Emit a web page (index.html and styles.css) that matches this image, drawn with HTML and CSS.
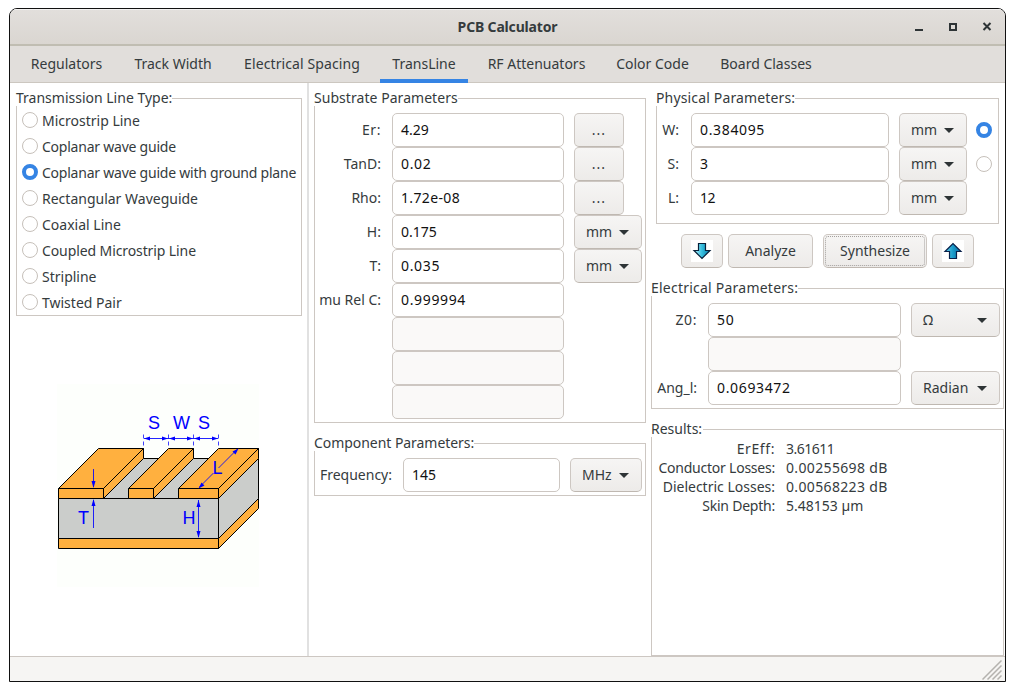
FILE: index.html
```html
<!DOCTYPE html>
<html lang="en">
<head>
<meta charset="utf-8">
<title>PCB Calculator</title>
<link rel="stylesheet" href="styles.css">
</head>
<body>
<div class="window">
  <header class="titlebar">
    <h1 class="title">PCB Calculator</h1>
    <div class="controls">
      <svg width="10" height="10" viewBox="0 0 10 10"><path d="M1 8h8" class="ctl"/></svg>
      <svg width="10" height="10" viewBox="0 0 10 10"><rect x="2" y="2" width="6" height="6" class="ctl"/></svg>
      <svg width="10" height="10" viewBox="0 0 10 10"><path d="M1.500 1l7 7M8.500 1l-7 7" class="ctl"/></svg>
    </div>
  </header>
  <nav class="tabs">
    <span class="tab t1">Regulators</span><span class="tab t2">Track Width</span><span class="tab t3">Electrical Spacing</span><span class="tab t4 active">TransLine</span><span class="tab t5">RF Attenuators</span><span class="tab t6">Color Code</span><span class="tab t7">Board Classes</span>
  </nav>
  <main class="content">
    <section class="col types">
      <fieldset class="group">
        <legend class="lg-type">Transmission Line Type:</legend>
        <div class="radio-list">
          <label class="choice"><i class="radio"></i><span>Microstrip Line</span></label>
          <label class="choice snug"><i class="radio"></i><span>Coplanar wave guide</span></label>
          <label class="choice snug"><i class="radio on"></i><span>Coplanar wave guide with ground plane</span></label>
          <label class="choice"><i class="radio"></i><span>Rectangular Waveguide</span></label>
          <label class="choice"><i class="radio"></i><span>Coaxial Line</span></label>
          <label class="choice slight"><i class="radio"></i><span>Coupled Microstrip Line</span></label>
          <label class="choice"><i class="radio"></i><span>Stripline</span></label>
          <label class="choice"><i class="radio"></i><span>Twisted Pair</span></label>
        </div>
      </fieldset>
      <svg class="diagram" width="202" height="203" viewBox="57 384 202 203">
        <rect x="57" y="384" width="202" height="203" fill="#fdfffc"/>
        <g stroke="#000" stroke-width="1" stroke-linejoin="round">
          <path fill="#cbcdcb" stroke="none" d="M103.500 498.500L143.500 458.500H218.500L258.500 458.500V498.500L218.500 538.500H58.500V498.500z"/>
          <path fill="none" d="M143.500 458.500h15M193.500 458.500h15"/>
          <path fill="#cbcdcb" d="M58.500 498.500h160v40h-160z"/>
          <path fill="#cbcdcb" d="M218.500 498.500l40-40v40l-40 40z"/>
          <path fill="#ffb03f" d="M58.500 538.500h160v10h-160zM218.500 538.500l40-40v10l-40 40z"/>
          <path fill="#ffb03f" d="M58.500 488.500l40-40h45l-40 40zM58.500 488.500h45v10h-45zM103.500 488.500l40-40v10l-40 40z"/>
          <path fill="#ffb03f" d="M128.500 488.500l40-40h25l-40 40zM128.500 488.500h25v10h-25zM153.500 488.500l40-40v10l-40 40z"/>
          <path fill="#ffb03f" d="M178.500 488.500l40-40h40l-40 40zM178.500 488.500h40v10h-40zM218.500 488.500l40-40v10l-40 40z"/>
        </g>
        <g stroke="#00f" fill="none">
          <path stroke-dasharray="4 3" stroke-opacity=".75" d="M143.500 434.500v13M168.500 434.500v13M193.500 434.500v13M218.500 434.500v13"/>
          <path stroke-opacity=".85" d="M144 438.500h74M93.500 469v18M93.500 500v28M198.500 500v37M237 449.500l-18.500 18.500M199.500 487l14-14"/>
        </g>
        <path fill="#00f" d="M144 438.500l6-2v4zM168 438.500l-6-2v4zM169 438.500l6-2v4zM193 438.500l-6-2v4zM194 438.500l6-2v4zM218 438.500l-6-2v4zM93.500 488l-2-7h4zM93.500 499l-2 7h4zM198.500 500l-2 7h4zM198.500 538l-2-7h4zM238.500 448.500l-6 3 3 3zM198.500 488.500l3-6 3 3z"/>
        <g class="dim">
          <text x="148" y="429">S</text><text x="173" y="429">W</text><text x="198" y="429">S</text>
          <text x="212.500" y="474">L</text><text x="78" y="524">T</text><text x="182.500" y="524">H</text>
        </g>
      </svg>
    </section>
    <section class="col substrate">
      <fieldset class="group">
        <legend class="lg-sub">Substrate Parameters</legend>
        <div class="rows">
          <span class="name loose">Er:</span><span class="field">4.29</span><span class="btn dots">...</span>
          <span class="name">TanD:</span><span class="field wide">0.02</span><span class="btn dots">...</span>
          <span class="name">Rho:</span><span class="field mid">1.72e-08</span><span class="btn dots">...</span>
          <span class="name">H:</span><span class="field">0.175</span><span class="btn select">mm</span>
          <span class="name">T:</span><span class="field wide">0.035</span><span class="btn select">mm</span>
          <span class="name">mu Rel C:</span><span class="field wide">0.999994</span><span></span>
          <span></span><span class="field off"></span><span></span>
          <span></span><span class="field off"></span><span></span>
          <span></span><span class="field off"></span><span></span>
        </div>
      </fieldset>
      <fieldset class="group component">
        <legend class="lg-comp">Component Parameters:</legend>
        <div class="rows">
          <span class="name">Frequency:</span><span class="field">145</span><span class="btn select">MHz</span>
        </div>
      </fieldset>
    </section>
    <section class="col results-col">
      <fieldset class="group physical">
        <legend class="lg-phys">Physical Parameters:</legend>
        <div class="rows">
          <span class="name">W:</span><span class="field wide">0.384095</span><span class="btn select">mm</span><i class="radio on"></i>
          <span class="name">S:</span><span class="field">3</span><span class="btn select">mm</span><i class="radio"></i>
          <span class="name">L:</span><span class="field tight">12</span><span class="btn select">mm</span><span></span>
        </div>
      </fieldset>
      <div class="actions">
        <span class="btn icon"><svg width="22" height="22" viewBox="0 0 22 22"><defs><linearGradient id="blue" x1="0" x2="1"><stop offset="0" stop-color="#b5f4ff"/><stop offset=".5" stop-color="#35bddd"/><stop offset="1" stop-color="#087ca9"/></linearGradient></defs><rect width="22" height="22" fill="#fff"/><path d="M7.500 3.500h7v7h4.500l-8 8-8-8h4.500z" fill="url(#blue)" stroke="#08203a" stroke-width="1.200"/></svg></span>
        <span class="btn analyze">Analyze</span>
        <span class="btn synth">Synthesize</span>
        <span class="btn icon"><svg width="22" height="22" viewBox="0 0 22 22"><defs><linearGradient id="deep" x1="0" x2="1"><stop offset="0" stop-color="#65cee9"/><stop offset=".5" stop-color="#1a9ccb"/><stop offset="1" stop-color="#0868a0"/></linearGradient></defs><rect width="22" height="22" fill="#fff"/><path d="M7.500 18.500h7v-7h4.500l-8-8-8 8h4.500z" fill="url(#deep)" stroke="#08204a" stroke-width="1.200"/></svg></span>
      </div>
      <fieldset class="group electrical">
        <legend class="lg-elec">Electrical Parameters:</legend>
        <div class="rows">
          <span class="name loose">Z0:</span><span class="field wide">50</span><span class="btn select">Ω</span>
          <span></span><span class="field off"></span><span></span>
          <span class="name">Ang_l:</span><span class="field wide">0.0693472</span><span class="btn select">Radian</span>
        </div>
      </fieldset>
      <fieldset class="group results">
        <legend class="lg-res">Results:</legend>
        <div class="output">
          <span class="name loose">ErEff:</span><span class="tight">3.61611</span>
          <span class="name snug">Conductor Losses:</span><span class="mid">0.00255698 dB</span>
          <span class="name">Dielectric Losses:</span><span class="mid">0.00568223 dB</span>
          <span class="name snug">Skin Depth:</span><span>5.48153 µm</span>
        </div>
      </fieldset>
    </section>
  </main>
  <footer class="status">
    <svg width="20" height="20" viewBox="0 0 20 20"><path d="M.5 19.500l19-19M5.500 19.500l14-14M10.500 19.500l9-9M15.500 19.500l4-4" stroke="#b4b2ae" stroke-width="1.500"/></svg>
  </footer>
</div>
</body>
</html>
```
FILE: styles.css
```css
* { box-sizing: border-box; }
body { margin: 0; padding: 8px 0 0 9px; background: #fff; color: #353b3d; font: 14px/19px "Noto Sans", "Open Sans", sans-serif; white-space: nowrap; }
.window { width: 997px; height: 674px; border: 1px solid #111; border-radius: 8px 8px 0 0; overflow: hidden; display: flex; flex-direction: column; }
.titlebar { height: 37px; flex: none; border-bottom: 2px solid #c0bdb2; background: linear-gradient(#e2dfdc, #dad6d1); box-shadow: inset 0 1px #f4f2f1; display: grid; grid-template-columns: 1fr auto 1fr; align-items: center; }
.title { grid-column: 2; margin: 0; font-size: 14px; line-height: 19px; font-weight: 700; letter-spacing: -.17px; }
.controls { justify-self: end; display: flex; gap: 24px; padding-right: 13px; }
.controls svg { display: block; }
.ctl { fill: none; stroke: #2e3436; stroke-width: 2; }
.tabs { height: 37px; flex: none; background: #e1dedb; border-bottom: 1px solid #ccc7c0; padding-left: 9px; display: flex; gap: 8px; }
.tab { text-align: center; line-height: 35px; height: 37px; }
.t1 { width: 95px; } .t2 { width: 102px; } .t3 { width: 140px; letter-spacing: .1px; } .t4 { width: 88px; } .t5 { width: 121px; } .t6 { width: 95px; } .t7 { width: 116px; }
.active { box-shadow: inset 0 -4px #3584e4; }
.content { height: 574px; flex: none; border-bottom: 1px solid #cdc7c2; display: flex; }
.group { margin: 0; padding: 0; border: 1px solid #cdc7c2; min-width: 0; }
legend { margin-left: -1px; padding: 0; line-height: 13px; height: 15px; }
.lg-type { width: 156px; } .lg-sub { width: 144px; letter-spacing: .05px; } .lg-comp { width: 160px; letter-spacing: -.05px; } .lg-phys { width: 139px; letter-spacing: .15px; } .lg-elec { width: 147px; letter-spacing: .23px; } .lg-res { width: 52px; }
.col { padding-top: 8px; }
.types { width: 299px; border-right: 2px solid #e1e1e1; padding-left: 6px; }
.types .group { width: 286px; height: 225px; }
.radio-list { padding: 1px 0 0 5px; }
.choice { display: flex; align-items: center; gap: 4px; height: 26px; }
.choice span { padding-top: 1px; }
.snug { letter-spacing: -.23px; }
.slight { letter-spacing: -.1px; }
.tight { letter-spacing: -.5px; }
.mid { letter-spacing: .35px; }
.wide { letter-spacing: .65px; }
.loose { letter-spacing: .6px; }
.radio { width: 16px; height: 16px; flex: none; border: 1px solid #c6c0ba; border-radius: 50%; background: #fff; }
.radio.on { border: 4px solid #3584e4; }
.diagram { display: block; margin: 68px 0 0 41px; }
.dim { font: 18px "Liberation Sans", Arial, sans-serif; fill: #00f; }
.rows { display: grid; grid-auto-rows: 34px; align-items: center; padding-top: 7px; }
.name { text-align: right; }
.rows .name { padding-bottom: 2px; }
.field { height: 34px; border: 1px solid #cdc7c2; border-radius: 5px; padding: 0 8px; line-height: 32px; color: #111; background: #fff; }
.field.off { background: #faf9f8; }
.btn { height: 34px; border: 1px solid #cdc7c2; border-bottom-color: #bfb8b1; border-radius: 5px; background: linear-gradient(#f6f5f4, #edebe9); display: flex; align-items: center; justify-content: center; line-height: 32px; }
.dots, .select, .analyze, .synth { align-items: flex-start; }
.dots { width: 50px; letter-spacing: 1px; }
.select { justify-content: space-between; padding: 0 12px 0 11px; }
.select::after { content: ""; margin-top: 14px; border: 5px solid transparent; border-top-color: #2e3436; border-bottom: 0; }
.substrate { width: 337px; padding-left: 5px; }
.substrate .group { width: 332px; height: 332px; }
.substrate .rows { grid-template-columns: 66px 183px 10px 68px; }
.substrate .rows .field { margin-left: 11px; }
.substrate .rows > span:nth-child(3n) { grid-column: 4; }
.substrate .component { height: 60px; margin-top: 13px; }
.substrate .component .rows { grid-template-columns: 77px 168px 10px 72px; }
.results-col { flex: 1; padding-left: 5px; }
.physical { width: 343px; height: 133px; margin-left: 5px; }
.physical .rows { grid-template-columns: 24px 198px 68px 16px; column-gap: 10px; }
.physical .name { padding-right: 2px; }
.physical .radio { margin-left: -1px; }
.actions { display: flex; padding: 10px 0 0 30px; gap: 5px; height: 44px; }
.icon { width: 42px; }
.icon svg { display: block; }
.analyze { width: 85px; }
.synth { width: 104px; margin-left: 5px; outline: 1px dotted #a3a09d; outline-offset: -3px; }
.electrical { width: 353px; height: 128px; margin-top: 13px; }
.electrical .rows { grid-template-columns: 46px 193px 89px; column-gap: 10px; }
.electrical .name { padding-right: 1px; }
.results { width: 353px; height: 234px; margin-top: 13px; }
.output { display: grid; grid-template-columns: 123px auto; column-gap: 11px; grid-auto-rows: 19px; padding-top: 2px; }
.status { flex: 1; background: #f6f5f3; display: flex; justify-content: flex-end; padding: 3px 3px 0 0; }
```
